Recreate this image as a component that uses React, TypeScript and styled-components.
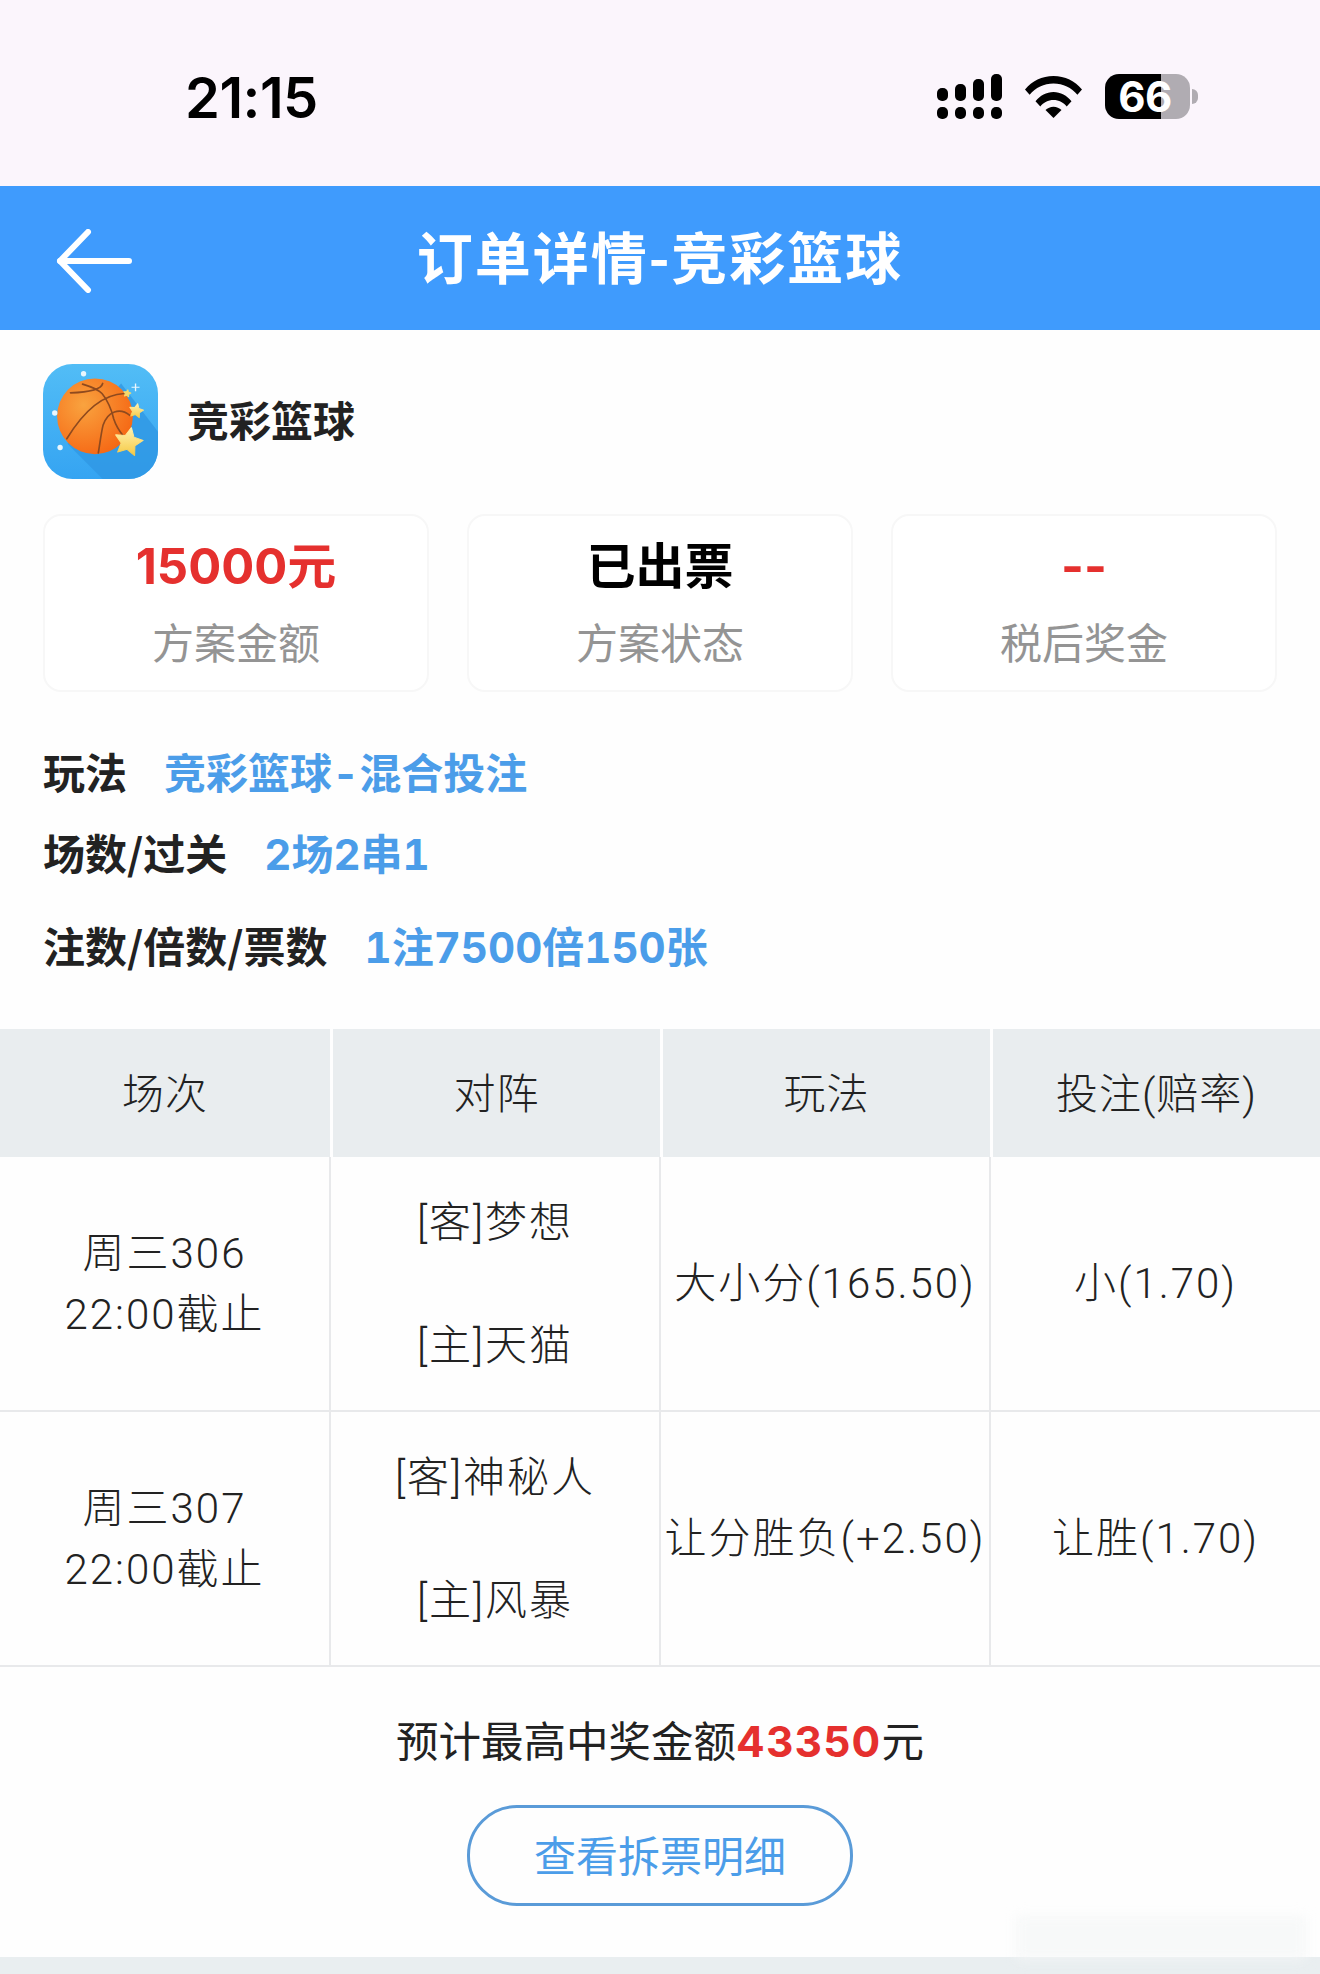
import { createGlobalStyle, styled } from 'styled-components';

const BLUE = '#4b9de9';
const RED = '#e5302e';
const CJK = '"Noto Sans CJK SC", "Liberation Sans", sans-serif';
const LATIN_CJK = 'Inter, "Noto Sans CJK SC", sans-serif';
const LIGHT_CJK = 'Roboto, "Noto Sans CJK SC", sans-serif';

const GlobalStyle = createGlobalStyle`
  html, body {
    margin: 0;
    padding: 0;
    background: #fff;
  }
  * {
    box-sizing: border-box;
  }
`;

const Page = styled.div`
  position: relative;
  width: 1320px;
  height: 1974px;
  overflow: hidden;
  font-family: ${CJK};
  color: #222;
  background: #fefefe;
`;

const StatusBar = styled.div`
  height: 186px;
  padding: 0 130px 0 185px;
  display: flex;
  align-items: center;
  justify-content: space-between;
  background: #fbf5fc;
`;

const Time = styled.div`
  font-family: Inter, sans-serif;
  font-size: 56px;
  font-weight: 600;
  letter-spacing: -0.5px;
  color: #000;
  line-height: 1;
  margin-top: 10px;
`;

const StatusIcons = styled.div`
  display: flex;
  align-items: center;
  gap: 23px;
  margin-top: 7px;
`;

const Battery = styled.div`
  position: relative;
  width: 85px;
  height: 45px;
  border-radius: 14px;
  background: linear-gradient(to right, #000 66%, #b0acb2 66%);
  color: #fff;
  font-family: Inter, sans-serif;
  font-size: 42px;
  font-weight: 700;
  line-height: 45px;
  text-align: center;
  letter-spacing: -0.5px;
  padding-right: 5px;

  &::after {
    content: '';
    position: absolute;
    right: -8px;
    top: 15px;
    width: 6px;
    height: 15px;
    border-radius: 0 6px 6px 0;
    background: #b0acb2;
  }
`;

const NavBar = styled.header`
  position: relative;
  height: 144px;
  display: flex;
  align-items: center;
  justify-content: center;
  background: #3f9bfd;
`;

const BackButton = styled.div`
  position: absolute;
  left: 56px;
  top: 43px;
  width: 76px;
  height: 64px;
`;

const NavTitle = styled.h1`
  margin: 0 0 6px;
  font-size: 56px;
  font-weight: 700;
  color: #fff;
  letter-spacing: 2px;
  line-height: 1;
`;

const Summary = styled.section`
  padding: 34px 43px 0;
`;

const GameRow = styled.div`
  display: flex;
  align-items: center;
  gap: 29px;
  height: 115px;
`;

const GameName = styled.div`
  margin-bottom: 6px;
  font-size: 42px;
  font-weight: 700;
  color: #222;
`;

const Cards = styled.div`
  display: grid;
  grid-template-columns: repeat(3, 386px);
  gap: 38px;
  margin-top: 35px;
`;

const Card = styled.div`
  height: 178px;
  border: 2px solid #f7f7f7;
  border-radius: 18px;
  display: flex;
  flex-direction: column;
  align-items: center;
  padding-top: 17px;
  background: #fff;
`;

const CardValue = styled.div<{ $color: string }>`
  font-size: 49px;
  font-weight: 700;
  line-height: 68px;
  color: ${(p) => p.$color};
  font-family: ${LATIN_CJK};
`;

const CardLabel = styled.div`
  margin-top: 10px;
  font-size: 42px;
  line-height: 60px;
  color: #949494;
`;

const InfoList = styled.div`
  margin-top: 38px;
`;

const InfoRow = styled.div<{ $height: number }>`
  display: flex;
  align-items: center;
  gap: 37px;
  height: ${(p) => p.$height}px;
`;

const InfoLabel = styled.span`
  font-size: 42px;
  font-weight: 700;
  color: #222;
`;

const InfoValue = styled.span`
  font-size: 42px;
  font-weight: 700;
  font-variant-numeric: tabular-nums;
  color: ${BLUE};
  font-family: ${LATIN_CJK};
`;

const Table = styled.section`
  margin-top: 32px;
`;

const HeadRow = styled.div`
  display: grid;
  grid-template-columns: 330px repeat(3, 327px);
  gap: 3px;
  height: 128px;
`;

const HeadCell = styled.div`
  display: flex;
  align-items: center;
  justify-content: center;
  padding-bottom: 5px;
  background: #e9edef;
  font-family: ${LIGHT_CJK};
  font-size: 42px;
  font-weight: 300;
  letter-spacing: 1px;
  color: #222;
`;

const BodyRow = styled.div`
  display: grid;
  grid-template-columns: 329px 330px 330px 331px;
  height: 255px;
  border-bottom: 2px solid #e8e9eb;
`;

const BodyCell = styled.div`
  display: flex;
  flex-direction: column;
  align-items: center;
  justify-content: center;
  font-family: ${LIGHT_CJK};
  font-size: 42px;
  font-weight: 300;
  line-height: 61px;
  letter-spacing: 2px;
  color: #222;
  white-space: nowrap;
  border-left: 2px solid #e8e9eb;

  &:first-child {
    border-left: 0;
  }
`;

const TeamCell = styled(BodyCell)`
  gap: 62px;
`;

const Footer = styled.section`
  display: flex;
  flex-direction: column;
  align-items: center;
  padding-top: 41px;
`;

const Forecast = styled.div`
  font-size: 42.5px;
  line-height: 62px;
  color: #222;
`;

const ForecastAmount = styled.span`
  color: ${RED};
  font-weight: 700;
  font-family: ${LATIN_CJK};
  letter-spacing: 1.2px;
`;

const DetailButton = styled.div`
  margin-top: 32px;
  width: 386px;
  height: 101px;
  padding-bottom: 4px;
  border: 3px solid #5a9bd8;
  border-radius: 50px;
  display: flex;
  align-items: center;
  justify-content: center;
  font-size: 42px;
  color: ${BLUE};
`;

const BottomBand = styled.div`
  position: absolute;
  left: 0;
  right: 0;
  bottom: 0;
  height: 17px;
  background: #e9eef0;
`;

const Watermark = styled.div`
  position: absolute;
  left: 1016px;
  top: 1916px;
  width: 290px;
  height: 44px;
  background: rgba(244, 246, 247, 0.7);
  filter: blur(6px);
`;

const SignalIcon = () => (
  <svg width="65" height="45" viewBox="0 0 65 45" fill="#000">
    <rect x="0" y="14" width="11" height="13" rx="5" />
    <rect x="18" y="10" width="11" height="17" rx="5" />
    <rect x="36" y="5" width="11" height="22" rx="5" />
    <rect x="54" y="0" width="11" height="27" rx="5" />
    <rect x="0" y="33" width="11" height="12" rx="5" />
    <rect x="18" y="33" width="11" height="12" rx="5" />
    <rect x="36" y="33" width="11" height="12" rx="5" />
    <rect x="54" y="33" width="11" height="12" rx="5" />
  </svg>
);

const WifiIcon = () => (
  <svg width="57" height="42" viewBox="0 0 57 42" fill="#000">
    <path d="M0 13.5C7 5 17 0 28.5 0S50 5 57 13.5l-4.6 5.2C46.5 11.5 38 7.5 28.5 7.5S10.500 11.500 4.600 18.700z" />
    <path d="M10.500 25.300C15 19.500 21.500 16 28.500 16s13.500 3.500 18 9.300l-4.800 5.200c-3.200-4-7.800-6.500-13.200-6.500s-10 2.500-13.200 6.500z" />
    <path d="M20.500 34c2-2 5-3.300 8-3.300s6 1.300 8 3.300l-8 8z" />
  </svg>
);

const BackIcon = () => (
  <svg width="76" height="64" viewBox="0 0 76 64" fill="none" stroke="#fff" strokeWidth="6" strokeLinecap="round" strokeLinejoin="round">
    <path d="M32 3 4 32l28 29" />
    <path d="M4 32h69" />
  </svg>
);

const Star = ({ cx, cy, r, fill }: { cx: number; cy: number; r: number; fill: string }) => {
  const points = Array.from({ length: 10 }, (_, i) => {
    const radius = i % 2 === 0 ? r : r * 0.5;
    const angle = (Math.PI / 5) * i - Math.PI / 2 + 0.2;
    return `${cx + radius * Math.cos(angle)},${cy + radius * Math.sin(angle)}`;
  }).join(' ');
  return <polygon points={points} fill={fill} stroke={fill} strokeWidth="3" strokeLinejoin="round" />;
};

const GameIcon = () => (
  <svg width="115" height="115" viewBox="67 72 343 343">
    <defs>
      <linearGradient id="iconBg" x1="0" y1="0" x2="0" y2="1">
        <stop offset="0" stopColor="#52bdf6" />
        <stop offset="1" stopColor="#35a4f2" />
      </linearGradient>
      <radialGradient id="ball" cx="0.35" cy="0.35" r="0.8">
        <stop offset="0" stopColor="#f9a33f" />
        <stop offset="1" stopColor="#f5600f" />
      </radialGradient>
      <linearGradient id="star" x1="0" y1="0" x2="0" y2="1">
        <stop offset="0" stopColor="#fff2b0" />
        <stop offset="1" stopColor="#f6c944" />
      </linearGradient>
      <clipPath id="iconClip">
        <rect x="67" y="72" width="343" height="343" rx="88" />
      </clipPath>
    </defs>
    <g clipPath="url(#iconClip)">
      <rect x="67" y="72" width="343" height="343" fill="url(#iconBg)" />
      <path d="M140 310 300 130 430 300V430H260z" fill="#2f97e4" opacity="0.8" />
    </g>
    <circle cx="222" cy="228" r="113" fill="url(#ball)" />
    <g fill="none" stroke="#8f4a1e" strokeWidth="5" strokeLinecap="round">
      <path d="M185 132c20 6 45 14 58 28 14 16 30 50 35 76 8 24 20 40 28 50" />
      <path d="M245 130c-4 18-40 26-96 28" />
      <path d="M310 160c-60 2-120 50-172 135" />
      <path d="M326 225c-30-24-66-12-80 30-6 24-10 60-14 82" />
    </g>
    <Star cx={345} cy={212} r={22} fill="url(#star)" />
    <Star cx={322} cy={305} r={44} fill="url(#star)" />
    <Star cx={318} cy={160} r={11} fill="#f6d96b" />
    <g fill="#eaf6fd">
      <circle cx="188" cy="101" r="8" />
      <circle cx="102" cy="218" r="8" />
      <circle cx="118" cy="321" r="8" />
      <path d="M341 130h4v10h10v3h-10v10h-4v-10h-10v-3h10z" />
    </g>
  </svg>
);

const matches = [
  { no: '周三306', team1: '[客]梦想', team2: '[主]天猫', play: '大小分(165.50)', bet: '小(1.70)' },
  { no: '周三307', team1: '[客]神秘人', team2: '[主]风暴', play: '让分胜负(+2.50)', bet: '让胜(1.70)' },
];

const App = () => (
  <Page>
    <GlobalStyle />
    <StatusBar>
      <Time>21:15</Time>
      <StatusIcons>
        <SignalIcon />
        <WifiIcon />
        <Battery>66</Battery>
      </StatusIcons>
    </StatusBar>
    <NavBar>
      <BackButton>
        <BackIcon />
      </BackButton>
      <NavTitle>订单详情-竞彩篮球</NavTitle>
    </NavBar>
    <Summary>
      <GameRow>
        <GameIcon />
        <GameName>竞彩篮球</GameName>
      </GameRow>
      <Cards>
        <Card>
          <CardValue $color={RED}>15000元</CardValue>
          <CardLabel>方案金额</CardLabel>
        </Card>
        <Card>
          <CardValue $color="#000">已出票</CardValue>
          <CardLabel>方案状态</CardLabel>
        </Card>
        <Card>
          <CardValue $color={RED}>--</CardValue>
          <CardLabel>税后奖金</CardLabel>
        </Card>
      </Cards>
      <InfoList>
        <InfoRow $height={81}>
          <InfoLabel>玩法</InfoLabel>
          <InfoValue>竞彩篮球-混合投注</InfoValue>
        </InfoRow>
        <InfoRow $height={81}>
          <InfoLabel>场数/过关</InfoLabel>
          <InfoValue>2场2串1</InfoValue>
        </InfoRow>
        <InfoRow $height={105}>
          <InfoLabel>注数/倍数/票数</InfoLabel>
          <InfoValue>1注7500倍150张</InfoValue>
        </InfoRow>
      </InfoList>
    </Summary>
    <Table>
      <HeadRow>
        <HeadCell>场次</HeadCell>
        <HeadCell>对阵</HeadCell>
        <HeadCell>玩法</HeadCell>
        <HeadCell>投注(赔率)</HeadCell>
      </HeadRow>
      {matches.map((m) => (
        <BodyRow key={m.no}>
          <BodyCell>
            <span>{m.no}</span>
            <span>22:00截止</span>
          </BodyCell>
          <TeamCell>
            <span>{m.team1}</span>
            <span>{m.team2}</span>
          </TeamCell>
          <BodyCell>{m.play}</BodyCell>
          <BodyCell>{m.bet}</BodyCell>
        </BodyRow>
      ))}
    </Table>
    <Footer>
      <Forecast>
        预计最高中奖金额<ForecastAmount>43350</ForecastAmount>元
      </Forecast>
      <DetailButton>查看拆票明细</DetailButton>
    </Footer>
    <BottomBand />
    <Watermark />
  </Page>
);

export default App;
